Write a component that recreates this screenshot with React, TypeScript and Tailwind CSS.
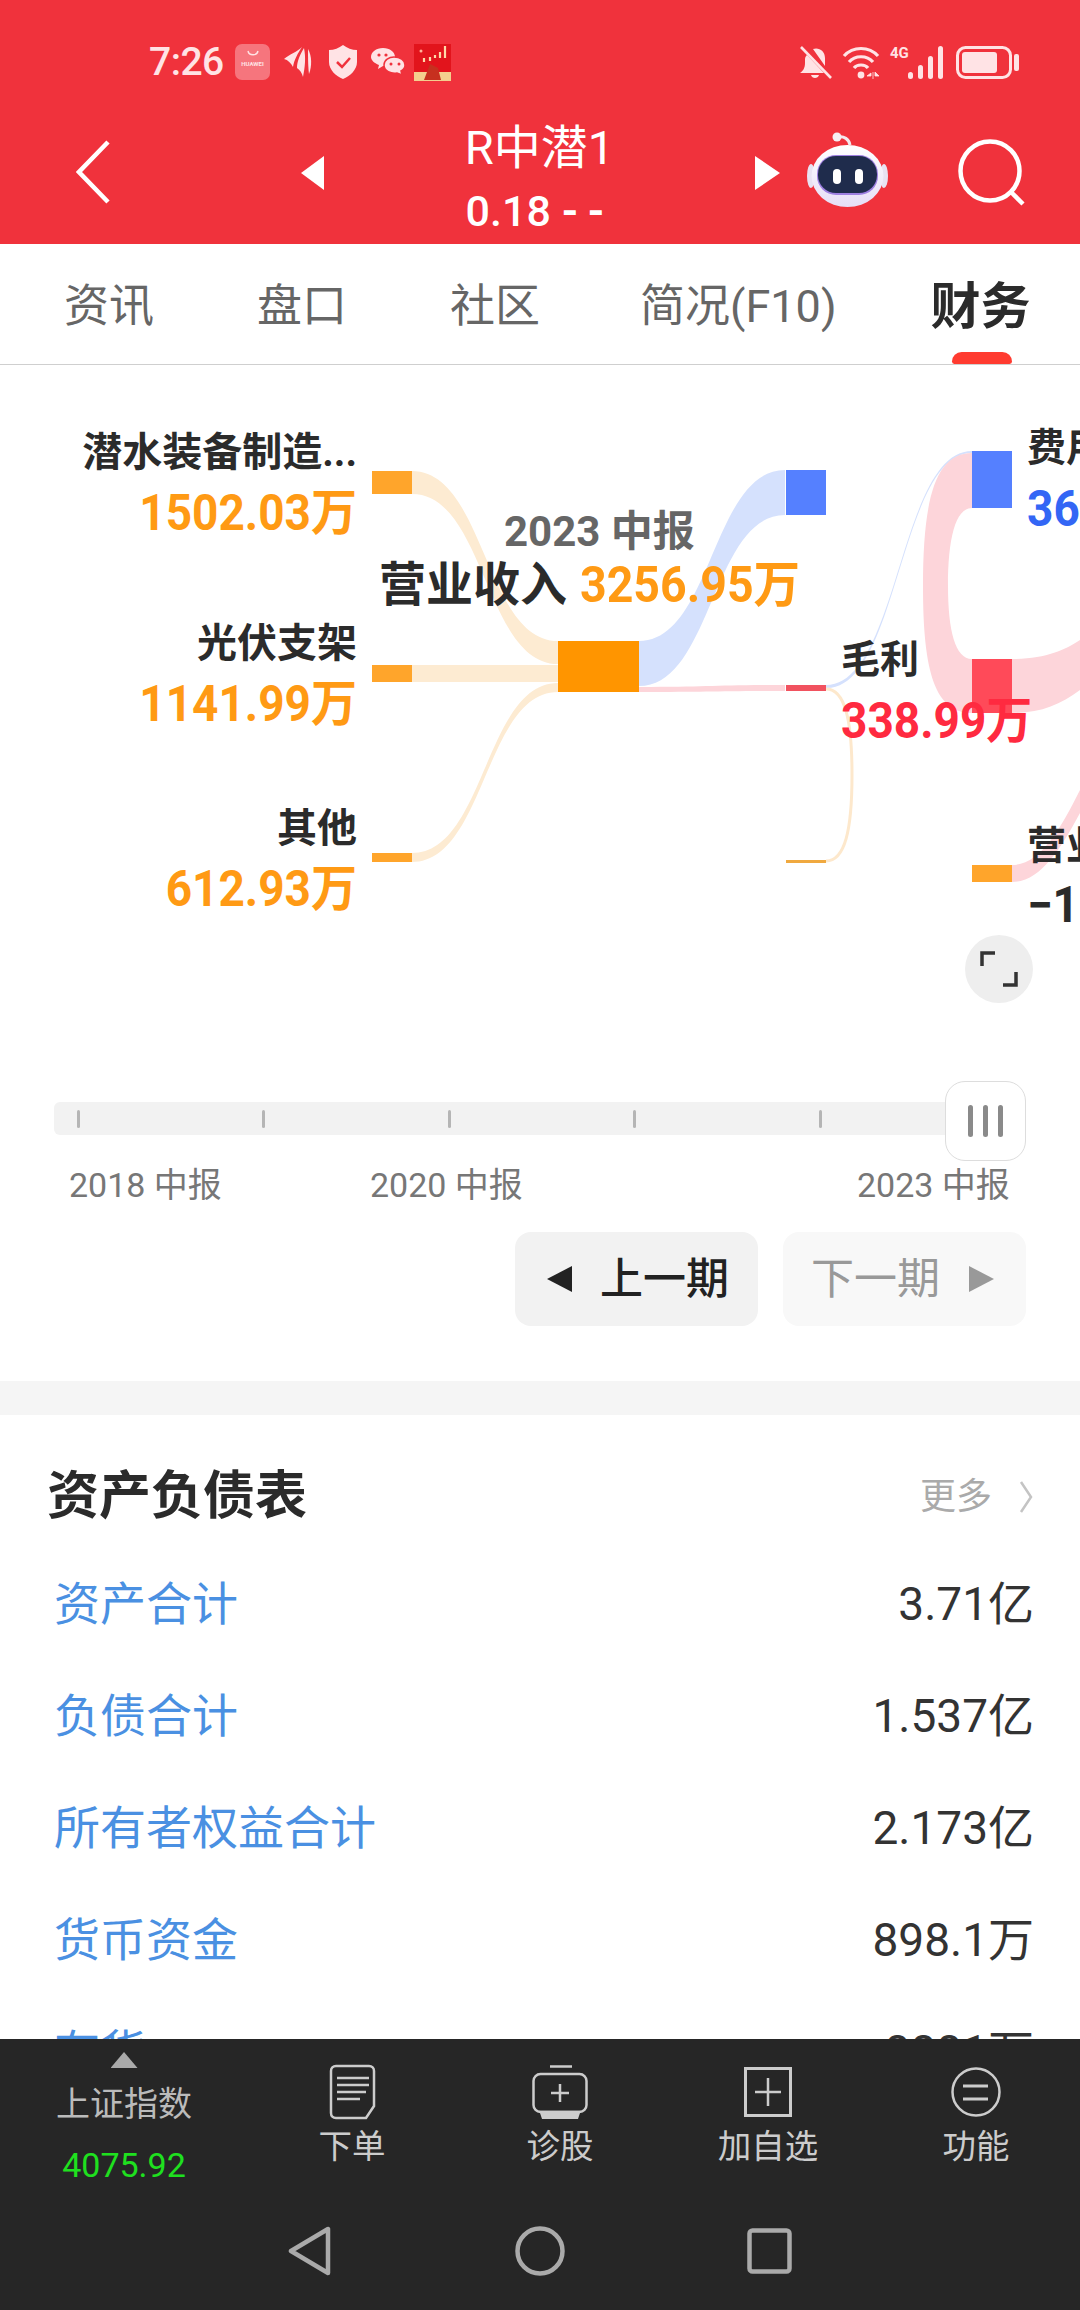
import React from "react";

const rib = (x0: number, a0: number, b0: number, x1: number, a1: number, b1: number) => {
  const m = (x0 + x1) / 2;
  return `M${x0} ${a0}C${m} ${a0} ${m} ${a1} ${x1} ${a1}L${x1} ${b1}C${m} ${b1} ${m} ${b0} ${x0} ${b0}Z`;
};

function StatusLeft() {
  return (
    <div className="flex items-center">
      <span className="text-[39px] leading-[44px] font-medium text-[#ffe3e5] w-[86px] tracking-[-0.5px]">7:26</span>
      <div className="w-[35px] h-[36px] rounded-[7px] bg-[#f6757d] flex flex-col items-center">
        <svg width="14" height="8" viewBox="0 0 14 8" className="mt-[6px]"><path d="M2 1C3 6 11 6 12 1" fill="none" stroke="#ffe3e5" strokeWidth="1.4" /></svg>
        <span className="text-[6px] leading-[8px] mt-[2px] font-bold text-[#ffe3e5]">HUAWEI</span>
      </div>
      <svg width="28" height="32" viewBox="0 0 28 32" className="ml-[14px]" fill="#ffe3e5">
        <path d="M0 13C6 8 13 6 18 1C14 7 10 14 9 21C7 17 4 14 0 13Z" />
        <path d="M20 2C16 9 13 15 13 22C16 24 18 27 19 31C21 21 22 12 20 2Z" />
        <path d="M24 3C28 10 28 20 25 28C24 20 24 10 24 3Z" />
      </svg>
      <svg width="28" height="34" viewBox="0 0 28 34" className="ml-[17px]">
        <path d="M14 0C18 3 23 5 28 5V17C28 25 21 31 14 34C7 31 0 25 0 17V5C5 5 10 3 14 0Z" fill="#ffe3e5" />
        <path d="M8 17L13 22L21 13" fill="none" stroke="#f0323c" strokeWidth="2.5" />
      </svg>
      <svg width="34" height="28" viewBox="0 0 34 28" className="ml-[14px]">
        <path d="M12 0C19 0 24 4 24 9C24 14 19 18 12 18L7 21L8 17C3 15 0 12 0 9C0 4 5 0 12 0Z" fill="#ffe3e5" />
        <path d="M23 9C29 9 34 12 34 17C34 20 32 22 30 23L31 27L26 25C20 26 13 23 13 17C13 12 18 9 23 9Z" fill="#ffe3e5" stroke="#f0323c" strokeWidth="1.5" />
        <circle cx="8" cy="7" r="1.6" fill="#f0323c" /><circle cx="15" cy="7" r="1.6" fill="#f0323c" />
        <circle cx="20" cy="16" r="1.5" fill="#f0323c" /><circle cx="28" cy="16" r="1.5" fill="#f0323c" />
      </svg>
      <svg width="37" height="37" viewBox="0 0 37 37" className="ml-[9px]">
        <rect width="37" height="37" fill="#e2141c" />
        <rect y="28" width="37" height="9" fill="#f4cf8e" />
        <path d="M31 2V14M26 8V14M21 11V14M10 14V18M16 13V17" stroke="#ffd9a8" strokeWidth="2.2" />
        <path d="M10 36L16 20L24 24L27 36Z" fill="#c7301f" />
        <circle cx="7" cy="7" r="1.5" fill="#ffb39a" />
      </svg>
    </div>
  );
}

function StatusRight() {
  return (
    <div className="flex items-center text-[#ffe3e5]">
      <svg width="32" height="33" viewBox="0 0 32 33" fill="#ffe3e5">
        <path d="M13 3C19 1 25 5 25 12V20L13 3ZM7 9L24 27H0C3 25 5 22 5 17V13C5 11 6 10 7 9ZM11 29H19C18 33 12 33 11 29Z" />
        <path d="M1 1L31 32" stroke="#ffe3e5" strokeWidth="2.6" />
      </svg>
      <svg width="38" height="33" viewBox="0 0 38 33" className="ml-[10px]">
        <g fill="none" stroke="#ffe3e5" strokeWidth="3.2">
          <path d="M2 10C11 0 27 0 36 10" /><path d="M7 16C13 9 25 9 31 16" /><path d="M12 22C15 18 23 18 26 22" />
        </g>
        <circle cx="19" cy="29" r="3.4" fill="#ffe3e5" />
        <path d="M29 27L25 30H29ZM31 26V33M33 26L37 30H33Z" fill="#ffe3e5" stroke="#ffe3e5" strokeWidth="0.8" />
      </svg>
      <div className="relative w-[53px] h-[33px] ml-[10px]">
        <span className="absolute left-0 top-0 text-[15px] leading-[15px] font-bold">4G</span>
        <svg width="35" height="33" viewBox="0 0 35 33" className="absolute right-0 top-0">
          <g fill="#ffe3e5">
            <rect x="0" y="26" width="5" height="7" rx="2.5" /><rect x="10" y="19" width="5" height="14" rx="2.5" />
            <rect x="20" y="10" width="5" height="23" rx="2.5" /><rect x="30" y="0" width="5" height="33" rx="2.5" />
          </g>
        </svg>
      </div>
      <svg width="63" height="33" viewBox="0 0 63 33" className="ml-[13px]">
        <rect x="1.5" y="1.5" width="53" height="30" rx="8" fill="none" stroke="#ffe3e5" strokeWidth="3" />
        <rect x="6" y="6" width="35" height="21" rx="3" fill="#ffe3e5" />
        <rect x="58" y="8" width="5" height="17" rx="2" fill="#ffe3e5" />
      </svg>
    </div>
  );
}

function Robot() {
  return (
    <svg width="81" height="75" viewBox="0 0 81 75">
      <defs>
        <linearGradient id="head" x1="0" y1="0" x2="0" y2="1">
          <stop offset="0" stopColor="#ffffff" /><stop offset="1" stopColor="#e6def6" />
        </linearGradient>
      </defs>
      <path d="M43 13C42 7 37 4 31 5" fill="none" stroke="#f4e9ee" strokeWidth="3" />
      <circle cx="30" cy="5" r="4.5" fill="#f6eef2" />
      <ellipse cx="4" cy="44" rx="4" ry="12" fill="#e8e2f2" />
      <ellipse cx="77" cy="44" rx="4" ry="12" fill="#e8e2f2" />
      <ellipse cx="40.5" cy="44" rx="36" ry="31" fill="url(#head)" />
      <rect x="10" y="23" width="61" height="40" rx="19" fill="#9d7fe0" />
      <rect x="11" y="24" width="59" height="37" rx="18" fill="#1f2c4c" />
      <rect x="26" y="37" width="8" height="15" rx="4" fill="#ffffff" />
      <rect x="48" y="37" width="8" height="15" rx="4" fill="#ffffff" />
    </svg>
  );
}

function Header() {
  return (
    <div className="h-[244px] bg-[#f0323c] shrink-0">
      <div className="h-[124px] flex items-center justify-between pl-[149px] pr-[61px]">
        <StatusLeft />
        <StatusRight />
      </div>
      <div className="h-[120px] flex items-start text-white">
        <svg width="34" height="64" viewBox="0 0 34 64" className="ml-[76px] mt-[16px]">
          <path d="M32 2L3 32L32 62" fill="none" stroke="#fff" strokeWidth="4.5" />
        </svg>
        <div className="ml-[191px] mt-[32px] w-[23px] h-[34px] bg-white [clip-path:polygon(100%_0,100%_100%,0_50%)]" />
        <div className="ml-[144px] w-[143px] flex flex-col items-center">
          <span className="text-[47px] leading-[46px] mt-[1px] whitespace-nowrap">R中潜1</span>
          <span className="mt-[17px] text-[43px] leading-[46px] font-medium whitespace-nowrap">0.18 <span className="font-bold tracking-[9px]">--</span></span>
        </div>
        <div className="ml-[144px] mt-[32px] w-[25px] h-[34px] bg-white [clip-path:polygon(0_0,100%_50%,0_100%)]" />
        <div className="ml-[27px] mt-[8px]"><Robot /></div>
        <svg width="70" height="70" viewBox="0 0 70 70" className="ml-[69px] mt-[12px]">
          <circle cx="33" cy="35" r="29.5" fill="none" stroke="#fff" strokeWidth="4.5" />
          <path d="M54 56L66 68" stroke="#fff" strokeWidth="4.5" />
        </svg>
      </div>
    </div>
  );
}

function Tabs() {
  return (
    <div className="relative h-[121px] shrink-0 bg-white border-b border-[#cfcfcf] flex items-center pt-[6px] text-[45px] text-[#666]">
      <span className="ml-[64px] leading-[60px]">资讯</span>
      <span className="ml-[103px] leading-[60px]">盘口</span>
      <span className="ml-[103px] leading-[60px]">社区</span>
      <span className="ml-[100px] leading-[60px] whitespace-nowrap">简况(F10)</span>
      <span className="ml-[94px] leading-[60px] text-[50px] font-bold text-[#2b2b2b]">财务</span>
      <div className="absolute left-[952px] bottom-0 w-[60px] h-[12px] rounded-t-[12px] rounded-b-[3px] bg-[#ff3b30]" />
    </div>
  );
}

function Label({ top, text, value }: { top: number; text: string; value: string }) {
  return (
    <div className="absolute right-[723px] flex flex-col items-end" style={{ top }}>
      <span className="text-[40px] leading-[50px] font-bold text-[#2b2b2b] whitespace-nowrap">{text}</span>
      <span className="mt-[10px] text-[46px] leading-[50px] font-bold text-[#ff9a14] whitespace-nowrap scale-y-[1.08]">{value}</span>
    </div>
  );
}

function Sankey() {
  const O = "#fdebd2", B = "#d5e1fd", P = "#fdd5da";
  return (
    <div className="relative h-[716px] shrink-0 overflow-hidden">
      <svg width="1080" height="716" viewBox="0 365 1080 716" className="absolute left-0 top-0">
        <path d={rib(412, 471, 494, 558, 641, 664)} fill={O} />
        <path d={rib(412, 665, 682, 558, 665, 682)} fill={O} />
        <path d={rib(412, 853, 862, 558, 683, 692)} fill={O} />
        <path d={rib(639, 641, 686, 785, 470, 515)} fill={B} />
        <path d={rib(639, 687, 692, 785, 685, 691)} fill={P} />
        <path d="M826 685C899 685 899 451 972 451L972 453C899 453 899 690 826 688Z" fill={B} />
        <path d="M826 689C845 689 852 720 852 775C852 830 845 861 826 861" fill="none" stroke="#fde8cc" strokeWidth="3" />
        <path d="M972 453C935 453 923 500 923 586C923 672 935 713 972 713L972 659C955 659 948 630 948 586C948 540 955 508 972 508Z" fill={P} />
        <path d="M1012 659C1045 659 1065 650 1080 640L1080 690C1060 705 1040 713 1012 713Z" fill={P} />
        <path d="M1012 865C1040 865 1060 830 1080 790L1080 813C1060 850 1040 882 1012 882Z" fill={P} />
        <rect x="372" y="471" width="40" height="23" fill="#ffa52b" />
        <rect x="372" y="665" width="40" height="17" fill="#ffa52b" />
        <rect x="372" y="853" width="40" height="9" fill="#ffa52b" />
        <rect x="558" y="641" width="81" height="51" fill="#ff9500" />
        <rect x="786" y="470" width="40" height="45" fill="#5580ff" />
        <rect x="786" y="685" width="40" height="6" fill="#f1525f" />
        <rect x="786" y="860" width="40" height="3" fill="#f0a93f" />
        <rect x="972" y="451" width="40" height="57" fill="#5580ff" />
        <rect x="972" y="659" width="40" height="54" fill="#ff4a59" />
        <rect x="972" y="865" width="40" height="17" fill="#ffa52b" />
      </svg>

      <Label top={63} text="潜水装备制造..." value="1502.03万" />
      <Label top={254} text="光伏支架" value="1141.99万" />
      <Label top={439} text="其他" value="612.93万" />

      <span className="absolute left-[504px] top-[142px] text-[42px] leading-[50px] font-bold text-[#666] whitespace-nowrap">2023 中报</span>
      <div className="absolute left-[379px] top-[190px] flex items-center whitespace-nowrap">
        <span className="text-[47px] leading-[60px] font-bold text-[#2b2b2b]">营业收入</span>
        <span className="ml-[13px] text-[46.5px] leading-[60px] font-bold text-[#ff9a14] scale-y-[1.08]">3256.95万</span>
      </div>

      <div className="absolute left-[841px] top-[270px] flex flex-col items-start">
        <span className="text-[39px] leading-[50px] font-bold text-[#2b2b2b]">毛利</span>
        <span className="mt-[11px] text-[46px] leading-[50px] font-bold text-[#ff2a40] whitespace-nowrap scale-y-[1.08]">338.99万</span>
      </div>
      <div className="absolute left-[1027px] top-[58px] flex flex-col items-start">
        <span className="text-[39px] leading-[50px] font-bold text-[#2b2b2b] whitespace-nowrap">费用</span>
        <span className="mt-[11px] text-[46px] leading-[50px] font-bold text-[#3366f5] whitespace-nowrap scale-y-[1.08]">366.9万</span>
      </div>
      <div className="absolute left-[1027px] top-[456px] flex flex-col items-start">
        <span className="text-[39px] leading-[50px] font-bold text-[#2b2b2b] whitespace-nowrap">营业利润</span>
        <span className="mt-[9px] text-[46px] leading-[50px] font-bold text-[#2b2b2b] whitespace-nowrap scale-y-[1.08]">−168.9万</span>
      </div>

      <div className="absolute left-[965px] top-[570px] w-[68px] h-[68px] rounded-full bg-[#eeeeee] flex items-center justify-center">
        <svg width="38" height="38" viewBox="0 0 38 38" fill="none" stroke="#333" strokeWidth="3.5">
          <path d="M2 16V3H15" /><path d="M36 22V35H23" />
        </svg>
      </div>
    </div>
  );
}

function Slider() {
  return (
    <div className="relative h-[80px] shrink-0 pt-[21px] pl-[54px]">
      <div className="w-[920px] h-[33px] rounded-[6px] bg-[#f2f2f2] flex items-center pl-[23px] gap-[182.4px]">
        {[0, 1, 2, 3, 4].map((i) => <div key={i} className="w-[3px] h-[18px] rounded-full bg-[#b5b5b5]" />)}
      </div>
      <div className="absolute left-[945px] top-0 w-[81px] h-[80px] rounded-[20px] bg-white border border-[#dddddd] flex items-center justify-center gap-[10px]">
        {[0, 1, 2].map((i) => <div key={i} className="w-[5px] h-[32px] rounded-full bg-[#8a8a8a]" />)}
      </div>
    </div>
  );
}

function Periods() {
  return (
    <>
      <div className="h-[40px] mt-[4px] shrink-0 flex items-center text-[34px] text-[#777] whitespace-nowrap">
        <span className="ml-[69px] w-[301px]">2018 中报</span>
        <span className="w-[487px]">2020 中报</span>
        <span>2023 中报</span>
      </div>
      <div className="mt-[27px] flex justify-end gap-[25px] pr-[54px] shrink-0">
        <div className="w-[243px] h-[94px] rounded-[16px] bg-[#f2f2f2] flex items-center pl-[32px]">
          <div className="w-[25px] h-[26px] bg-[#222] [clip-path:polygon(100%_0,100%_100%,0_50%)]" />
          <span className="ml-[28px] text-[43px] leading-[50px] text-[#222] font-medium">上一期</span>
        </div>
        <div className="w-[243px] h-[94px] rounded-[16px] bg-[#f8f8f8] flex items-center pl-[28px]">
          <span className="text-[43px] leading-[50px] text-[#999]">下一期</span>
          <div className="ml-[29px] w-[25px] h-[26px] bg-[#999] [clip-path:polygon(0_0,100%_50%,0_100%)]" />
        </div>
      </div>
      <div className="mt-[55px] h-[34px] bg-[#f5f5f5] shrink-0" />
    </>
  );
}

const rows = [
  ["资产合计", "3.71亿"],
  ["负债合计", "1.537亿"],
  ["所有者权益合计", "2.173亿"],
  ["货币资金", "898.1万"],
  ["存货", "8881万"],
];

function Balance() {
  return (
    <div className="pt-[42px]">
      <div className="h-[80px] flex items-center justify-between pl-[47px] pr-[47px]">
        <span className="text-[52px] leading-[60px] font-bold text-[#2b2b2b]">资产负债表</span>
        <div className="flex items-center">
          <span className="text-[36px] leading-[44px] text-[#aaa]">更多</span>
          <svg width="14" height="32" viewBox="0 0 14 32" className="ml-[27px]"><path d="M2 1L12 16L2 31" fill="none" stroke="#c4c4c4" strokeWidth="2.5" /></svg>
        </div>
      </div>
      <div className="mt-[11px]">
        {rows.map(([k, v]) => (
          <div key={k} className="h-[112px] flex items-center justify-between pl-[54px] pr-[46px]">
            <span className="text-[46px] leading-[60px] text-[#4a90e2]">{k}</span>
            <span className="text-[46px] leading-[60px] text-[#333]">{v}</span>
          </div>
        ))}
      </div>
    </div>
  );
}

function BottomItem({ label, children }: { label: string; children: React.ReactNode }) {
  return (
    <div className="w-[208px] flex flex-col items-center">
      <div className="mt-[25px] h-[56px] flex items-center justify-center">{children}</div>
      <span className="mt-[7px] text-[33.5px] leading-[40px] text-[#cccccc] whitespace-nowrap">{label}</span>
    </div>
  );
}

function BottomBar() {
  const s = "#cccccc";
  return (
    <div className="h-[271px] shrink-0 bg-[#262626]">
      <div className="h-[180px] flex items-start">
        <div className="w-[248px] flex flex-col items-center">
          <div className="mt-[13px] w-[27px] h-[16px] bg-[#aaaaaa] [clip-path:polygon(50%_0,100%_100%,0_100%)]" />
          <span className="mt-[16px] text-[34px] leading-[40px] text-[#bbbbbb] whitespace-nowrap">上证指数</span>
          <span className="mt-[21px] text-[34px] leading-[40px] text-[#1fe01f]">4075.92</span>
        </div>
        <BottomItem label="下单">
          <svg width="47" height="56" viewBox="0 0 47 56" fill="none" stroke={s} strokeWidth="2.5">
            <path d="M7 2H40C43 2 45 4 45 7V42L37 54H7C4 54 2 52 2 49V7C2 4 4 2 7 2Z" />
            <path d="M8 14H40M8 21H40M8 28H37M8 35H31" />
          </svg>
        </BottomItem>
        <BottomItem label="诊股">
          <svg width="56" height="54" viewBox="0 0 56 54" fill="none" stroke={s} strokeWidth="2.5">
            <path d="M18 1.5H40" />
            <rect x="1.5" y="9" width="53" height="38" rx="7" />
            <path d="M28 19V37M19 28H37" />
            <path d="M9 47H47L45 53H11Z" fill={s} />
          </svg>
        </BottomItem>
        <BottomItem label="加自选">
          <svg width="48" height="50" viewBox="0 0 48 50" fill="none" stroke={s} strokeWidth="3">
            <rect x="1.5" y="1.5" width="45" height="47" />
            <path d="M24 11V39M11 25H37" strokeWidth="2.5" />
          </svg>
        </BottomItem>
        <BottomItem label="功能">
          <svg width="50" height="50" viewBox="0 0 50 50" fill="none" stroke={s} strokeWidth="2.5">
            <circle cx="25" cy="25" r="23.5" />
            <path d="M12 19H37M12 32H37" strokeWidth="3" />
          </svg>
        </BottomItem>
      </div>
      <div className="h-[91px] flex items-start pt-[7px] pl-[288px]">
        <svg width="43" height="50" viewBox="0 0 43 50" fill="none" stroke="#aaaaaa" strokeWidth="4.5">
          <path d="M40 3V47L3 25Z" strokeLinejoin="round" />
        </svg>
        <svg width="50" height="50" viewBox="0 0 50 50" fill="none" stroke="#aaaaaa" strokeWidth="4.5" className="ml-[184px]">
          <circle cx="25" cy="25" r="22.5" />
        </svg>
        <svg width="45" height="46" viewBox="0 0 45 46" fill="none" stroke="#aaaaaa" strokeWidth="4.5" className="ml-[182px] mt-[2px]">
          <rect x="2.5" y="2.5" width="40" height="41" rx="3" />
        </svg>
      </div>
    </div>
  );
}

export default function App() {
  return (
    <div className="w-[1080px] h-[2310px] overflow-hidden flex flex-col bg-white font-['Roboto','Noto_Sans_CJK_SC',sans-serif]">
      <Header />
      <Tabs />
      <div className="flex-1 min-h-0 overflow-hidden flex flex-col">
        <Sankey />
        <Slider />
        <Periods />
        <Balance />
      </div>
      <BottomBar />
    </div>
  );
}
